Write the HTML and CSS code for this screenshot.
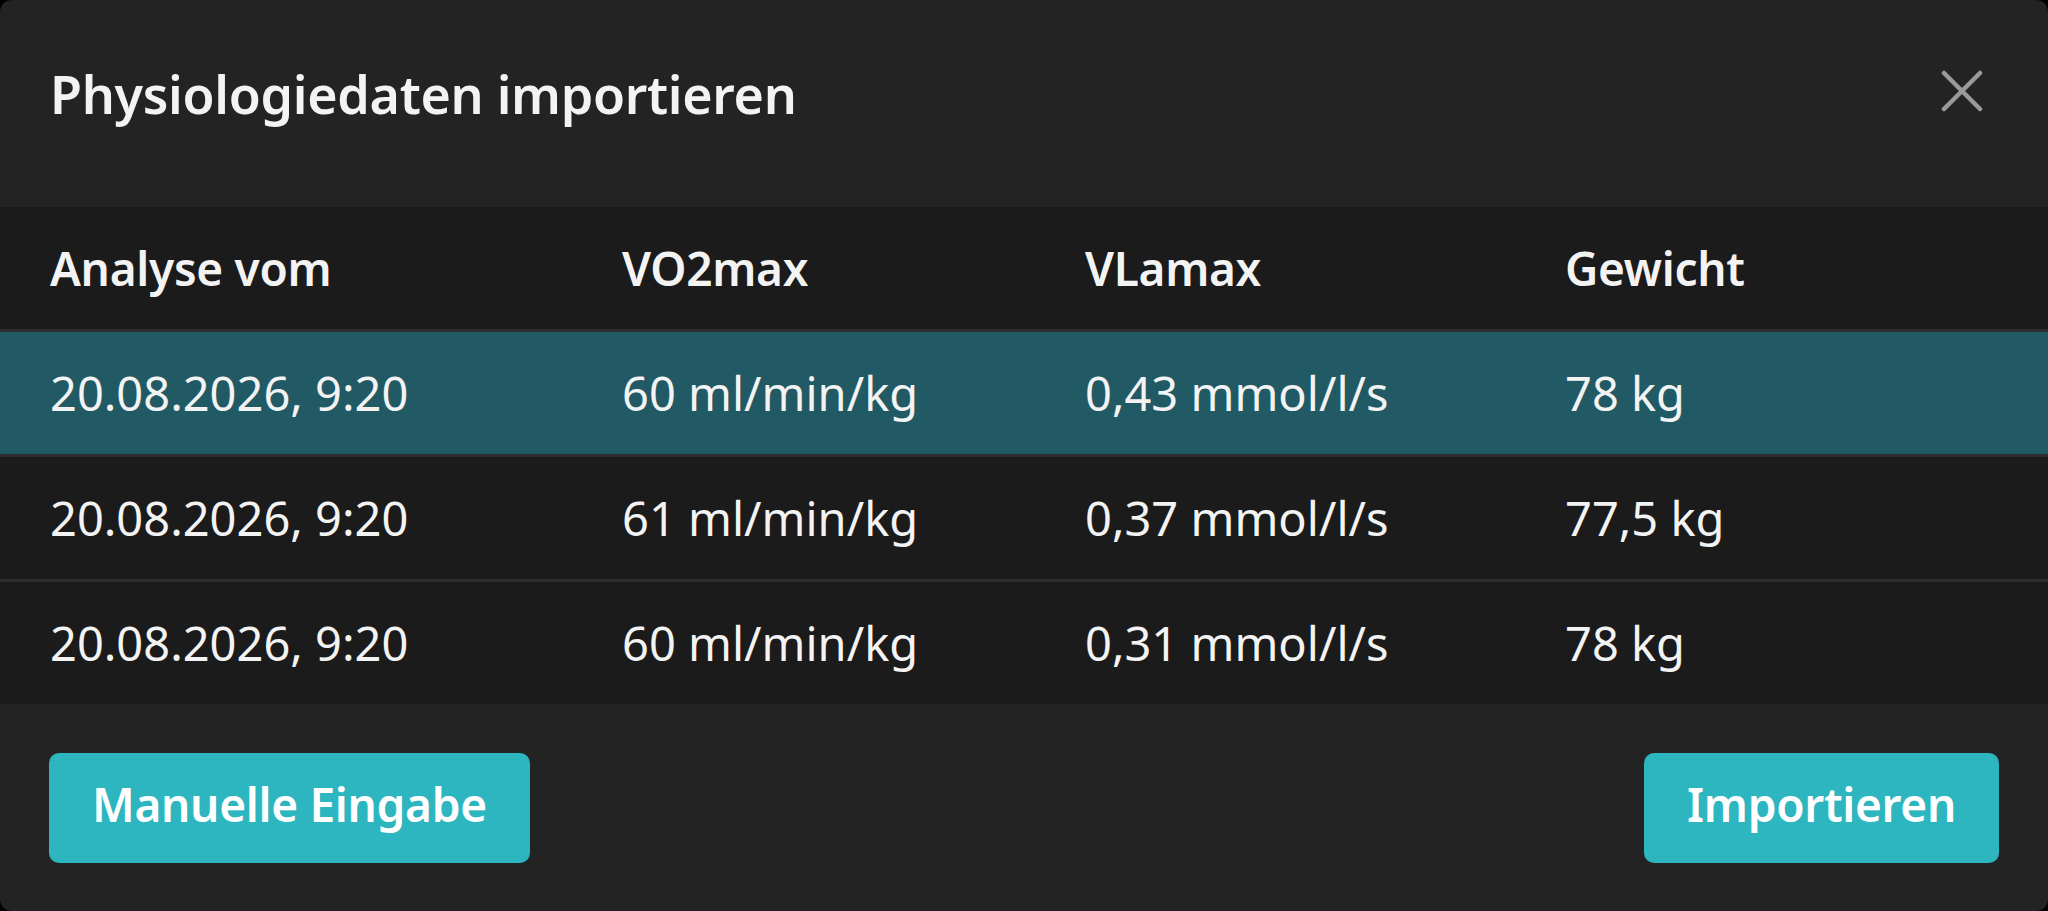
FILE: index.html
```html
<!DOCTYPE html>
<html lang="de">
<head>
<meta charset="utf-8">
<title>Physiologiedaten importieren</title>
<link rel="stylesheet" href="styles.css">
</head>
<body>
<div class="modal">
  <header class="modal-header">
    <h1 class="modal-title">Physiologiedaten importieren</h1>
    <button class="close-btn" aria-label="Schließen">
      <svg viewBox="0 0 42 42" width="42" height="42">
        <path d="M3 3 L39 39 M39 3 L3 39" stroke="#9a9a9a" stroke-width="4.5" stroke-linecap="round" fill="none"/>
      </svg>
    </button>
  </header>
  <div class="table">
    <div class="row head">
      <div class="cell">Analyse vom</div>
      <div class="cell">VO2max</div>
      <div class="cell">VLamax</div>
      <div class="cell">Gewicht</div>
    </div>
    <div class="row selected">
      <div class="cell">20.08.2026, 9:20</div>
      <div class="cell">60 ml/min/kg</div>
      <div class="cell">0,43 mmol/l/s</div>
      <div class="cell">78 kg</div>
    </div>
    <div class="row">
      <div class="cell">20.08.2026, 9:20</div>
      <div class="cell">61 ml/min/kg</div>
      <div class="cell">0,37 mmol/l/s</div>
      <div class="cell">77,5 kg</div>
    </div>
    <div class="row last">
      <div class="cell">20.08.2026, 9:20</div>
      <div class="cell">60 ml/min/kg</div>
      <div class="cell">0,31 mmol/l/s</div>
      <div class="cell">78 kg</div>
    </div>
  </div>
  <footer class="modal-footer">
    <button class="btn">Manuelle Eingabe</button>
    <button class="btn">Importieren</button>
  </footer>
</div>
</body>
</html>
```
FILE: styles.css
```css
html, body {
  margin: 0;
  padding: 0;
  background: #000;
}

body {
  font-family: "Noto Sans", "Open Sans", sans-serif;
  color: #f3f3f3;
}

.modal {
  width: 2048px;
  height: 911px;
  background: #232323;
  border-radius: 12px;
  display: flex;
  flex-direction: column;
  overflow: hidden;
}

.modal-header {
  box-sizing: border-box;
  height: 207px;
  padding: 0 65px 19px 50px;
  display: flex;
  align-items: center;
  justify-content: space-between;
}

.modal-title {
  margin: 0;
  font-size: 52px;
  font-weight: 600;
  line-height: 1.2;
  letter-spacing: -0.3px;
}

.close-btn {
  background: none;
  border: 0;
  padding: 0;
  margin-bottom: 6px;
  width: 42px;
  height: 42px;
  display: flex;
  cursor: pointer;
}

.table {
  background: #1b1b1b;
  display: flex;
  flex-direction: column;
}

.row {
  box-sizing: border-box;
  height: 125px;
  padding-left: 50px;
  border-bottom: 3px solid #2e2e2e;
  display: grid;
  grid-template-columns: 572px 463px 480px 1fr;
  align-items: center;
  font-size: 47px;
}

.row.last {
  height: 122px;
  border-bottom: 0;
}

.row.head {
  font-size: 46px;
  font-weight: 600;
  letter-spacing: -0.3px;
}

.row.selected {
  background: #215a64;
}

.cell {
  white-space: nowrap;
}

.modal-footer {
  flex: 1;
  padding: 0 49px;
  display: flex;
  align-items: center;
  justify-content: space-between;
}

.btn {
  box-sizing: border-box;
  height: 110px;
  padding: 0 43px 8px;
  background: #2db6c0;
  color: #fff;
  border: 0;
  border-radius: 10px;
  font-family: "Noto Sans", "Open Sans", sans-serif;
  font-size: 46px;
  font-weight: 600;
  letter-spacing: -0.3px;
  cursor: pointer;
}
```
